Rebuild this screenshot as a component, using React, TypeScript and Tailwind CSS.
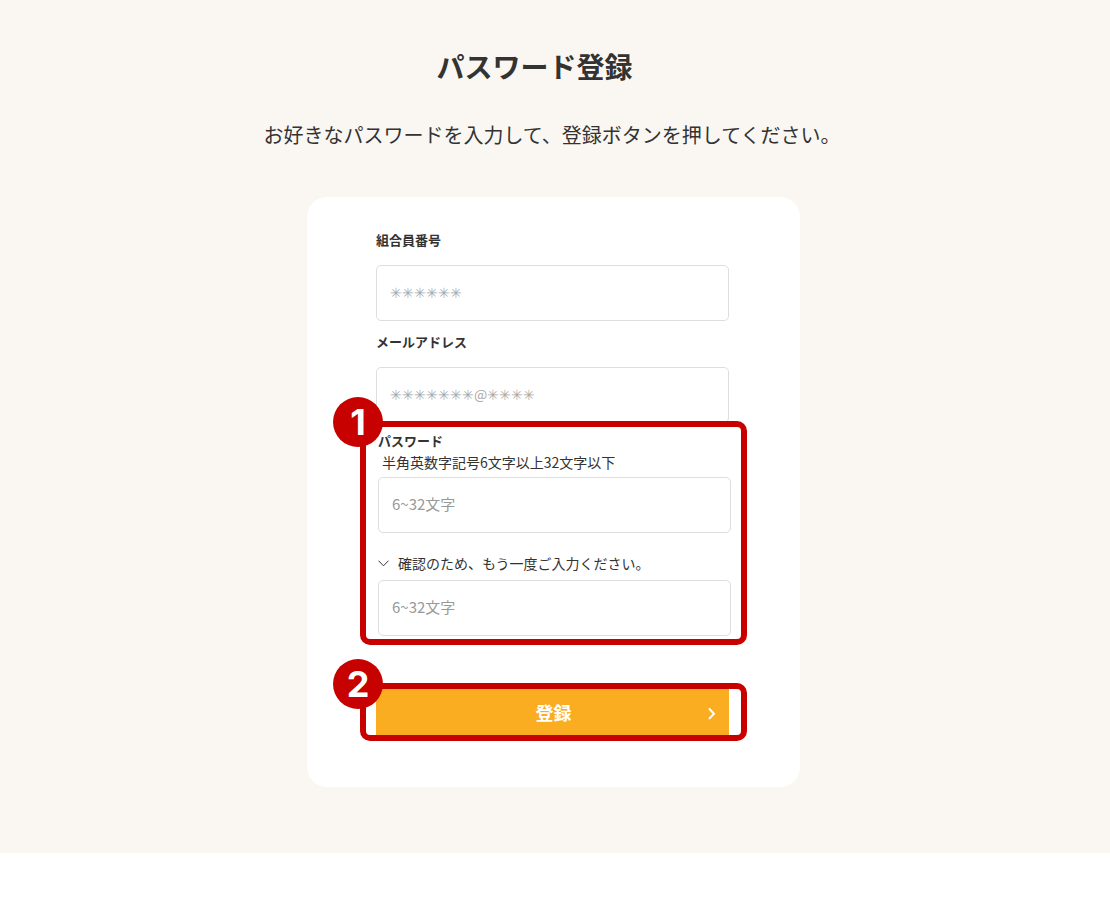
import type { InputHTMLAttributes, ReactNode } from "react";

function Field({ className = "", ...props }: InputHTMLAttributes<HTMLInputElement>) {
  return (
    <input
      className={`block h-14 w-full rounded-[5px] border border-[#dedede] bg-white px-[13px] pb-[3px] text-[#333] focus:outline-none ${className}`}
      {...props}
    />
  );
}

function Step({ number, className, children }: { number: number; className: string; children: ReactNode }) {
  return (
    <div className={`relative -mr-[18px] -ml-4 rounded-[10px] border-6 border-[#c70000] bg-white ${className}`}>
      <span className="absolute -top-[30px] -left-[33px] flex size-[50px] items-center justify-center rounded-full bg-[#c70000] font-[Inter,sans-serif] text-4xl font-bold text-white">
        {number}
      </span>
      {children}
    </div>
  );
}

export default function App() {
  return (
    <div className="min-h-screen bg-white font-['Noto_Sans_CJK_JP',sans-serif] text-[#333]" lang="ja">
      <main className="flex flex-col items-center bg-[#faf7f2] pt-[46px] pr-[3px] pb-[66px]">
        <h1 className="pr-[38px] text-[28px] leading-10 font-bold">パスワード登録</h1>
        <p className="mt-[34px] pr-[3px] text-xl leading-[30px]">
          お好きなパスワードを入力して、登録ボタンを押してください。
        </p>

        <form
          className="mt-[47px] w-full max-w-[493px] rounded-[20px] bg-white pt-[34px] pr-[71px] pb-[46px] pl-[69px]"
          onSubmit={(e) => e.preventDefault()}
        >
          <label htmlFor="member" className="mb-4 block text-[13px] leading-[18px] font-bold">
            組合員番号
          </label>
          <Field id="member" className="text-sm placeholder:text-[#aaa]" placeholder="✳✳✳✳✳✳" />

          <label htmlFor="email" className="mt-3 mb-4 block text-[13px] leading-[18px] font-bold">
            メールアドレス
          </label>
          <Field id="email" className="text-sm placeholder:text-[#aaa]" placeholder="✳✳✳✳✳✳✳@✳✳✳✳" />

          <Step number={1} className="-mt-[2px] py-[3px] pr-[10px] pl-3">
            <label htmlFor="password" className="block text-[13px] leading-[21px] font-bold">
              パスワード
            </label>
            <p className="pl-1 text-sm leading-[22px]">半角英数字記号6文字以上32文字以下</p>
            <Field
              id="password"
              type="password"
              className="mt-1 text-[15px] placeholder:text-[#999]"
              placeholder="6~32文字"
            />

            <label htmlFor="confirm" className="mt-[19px] flex items-center gap-[9px] text-sm leading-[22px]">
              <svg className="h-[7px] w-[11px]" viewBox="0 0 11 7" fill="none" stroke="#333">
                <path d="M0.5 0.7 5.5 5.8 10.5 0.7" />
              </svg>
              確認のため、もう一度ご入力ください。
            </label>
            <Field
              id="confirm"
              type="password"
              className="mt-[6px] text-[15px] placeholder:text-[#999]"
              placeholder="6~32文字"
            />
          </Step>

          <Step number={2} className="mt-[38px] pr-3 pl-[10px]">
            <button
              type="submit"
              className="flex h-[46px] w-full items-center bg-[#fbad22] px-3 text-lg font-bold text-white"
            >
              <span className="flex-1 pl-3">登録</span>
              <svg className="h-4 w-[10px]" viewBox="0 0 10 16" fill="none" stroke="currentColor" strokeWidth="2">
                <path d="M2.5 5 7 9.7 2.5 14.4" strokeLinecap="round" />
              </svg>
            </button>
          </Step>
        </form>
      </main>
    </div>
  );
}
